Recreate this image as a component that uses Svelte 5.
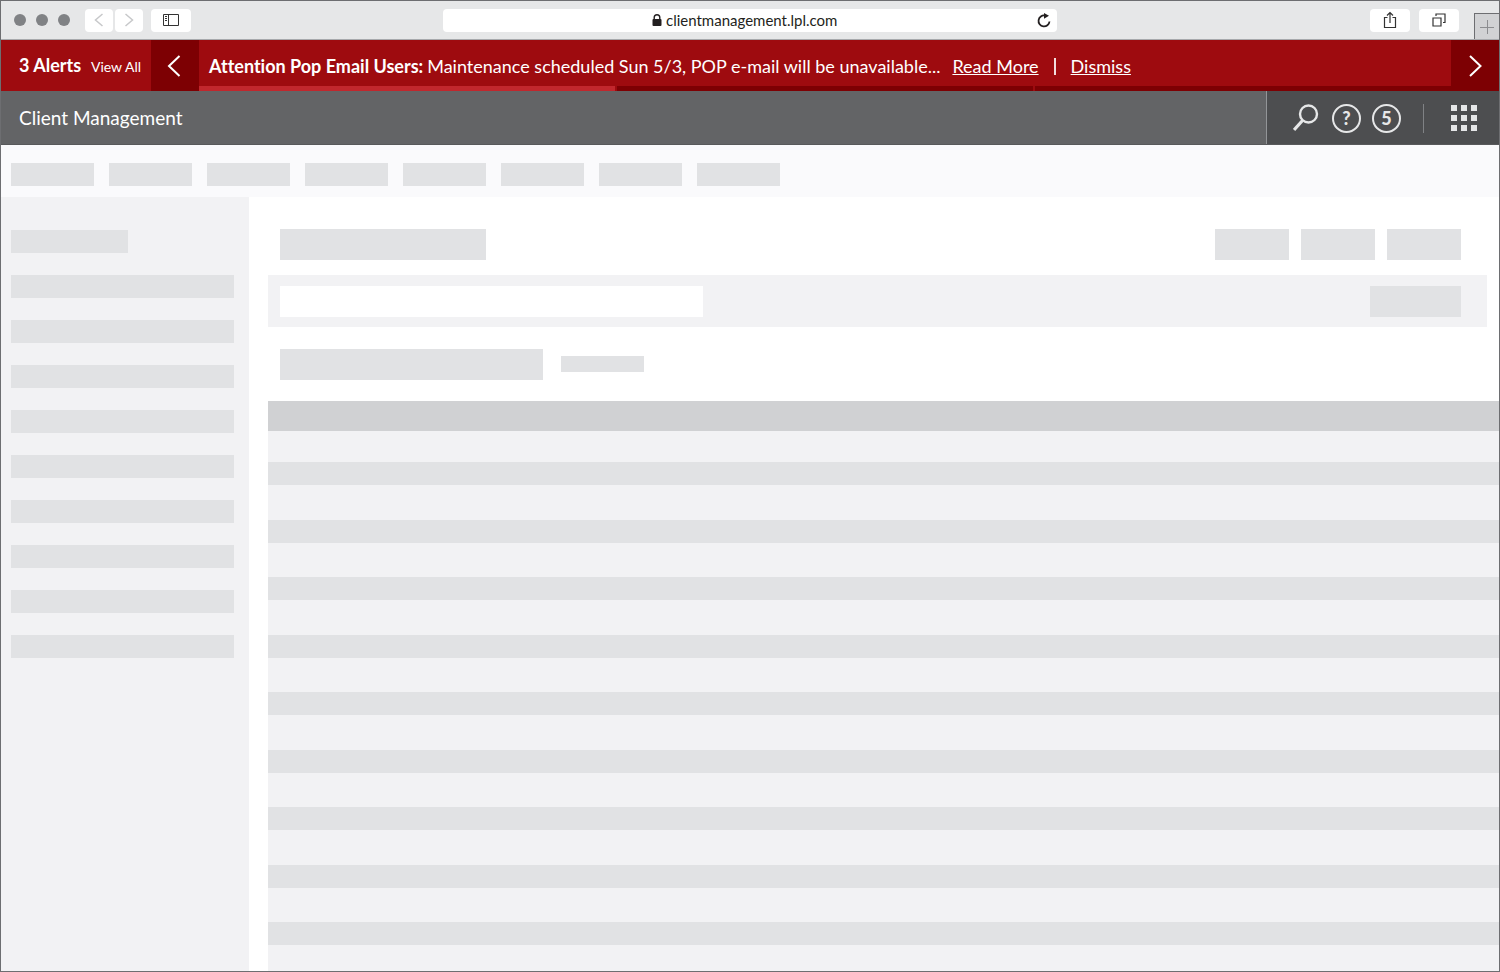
<script>
    let tabs = Array(8)
    let sideLinks = Array(9)
    let actions = Array(3)
    let rows = Array(9)

    let alerts = [
        { title: "Attention Pop Email Users:", text: "Maintenance scheduled Sun 5/3, POP e-mail will be unavailable..." },
        { title: "", text: "" },
        { title: "", text: "" }
    ]
    let current = 0
    let url = "clientmanagement.lpl.com"
</script>

<div class="window">
    <div class="toolbar">
        <div class="tools">
            <div class="lights">
                <span></span>
                <span></span>
                <span></span>
            </div>
            <div class="history">
                <button class="tool" aria-label="Back">
                    <svg width="10" height="14" viewBox="0 0 10 14"><path d="M8.5 1L1.5 7l7 6" fill="none" stroke="#c7c8ca" stroke-width="1.5" /></svg>
                </button>
                <button class="tool" aria-label="Forward">
                    <svg width="10" height="14" viewBox="0 0 10 14"><path d="M1.5 1l7 6-7 6" fill="none" stroke="#c7c8ca" stroke-width="1.5" /></svg>
                </button>
            </div>
            <button class="tool wide" aria-label="Sidebar">
                <svg width="16" height="14" viewBox="0 0 16 14" fill="none" stroke="#333">
                    <path d="M.5 1.5h15v11H.5zM5.5 1.5v11" />
                    <path d="M2 3.5h2M2 5.5h2M2 7.5h2" />
                </svg>
            </button>
        </div>
        <div class="address">
            <svg class="lock" width="10" height="12" viewBox="0 0 10 12">
                <path d="M2.2 6V3.6a2.8 2.8 0 0 1 5.6 0V6" fill="none" stroke="#231f20" stroke-width="1.4" />
                <rect x="0.5" y="5" width="9" height="7" rx="1" fill="#231f20" />
            </svg>
            <input type="text" aria-label="Address" bind:value={url}>
            <button class="reload" aria-label="Reload">
                <svg width="14" height="15" viewBox="0 0 14 15">
                    <path d="M8 2.5a5.5 5.5 0 1 0 4.5 6" fill="none" stroke="#231f20" stroke-width="1.8" />
                    <path d="M7 0l5 2.8-5 3z" fill="#231f20" />
                </svg>
            </button>
        </div>
        <div class="tools right">
            <button class="tool wide" aria-label="Share">
                <svg width="14" height="18" viewBox="0 0 14 18" fill="none" stroke="#333" stroke-width="1.2">
                    <path d="M4.5 6.5h-3v10h11v-10h-3" />
                    <path d="M7 12V1.5M4 4.5l3-3 3 3" />
                </svg>
            </button>
            <button class="tool wide" aria-label="Show tabs">
                <svg width="14" height="14" viewBox="0 0 14 14" fill="none" stroke="#333" stroke-width="1.2">
                    <path d="M1 5h8v8H1z" />
                    <path d="M4 3V1h9v8.5h-2" />
                </svg>
            </button>
            <button class="new-tab" aria-label="New tab">
                <svg width="14" height="14" viewBox="0 0 14 14"><path d="M7.5 0v14M0 7.5h14" stroke="#8c8d90" /></svg>
            </button>
        </div>
    </div>

    <div class="alerts">
        <div class="count">
            <strong>{alerts.length} Alerts</strong>
            <a href="#all">View All</a>
        </div>
        <button class="arrow" aria-label="Previous alert">
            <svg width="18" height="22" viewBox="0 0 18 22"><path d="M13.5 1L3 11l10.5 10" fill="none" stroke="#fff" stroke-width="2" /></svg>
        </button>
        <div class="message">
            <p>
                <strong>{alerts[current].title}</strong>
                <span>{alerts[current].text}</span>
                <a href="#more">Read More</a>
                <i></i>
                <a href="#dismiss">Dismiss</a>
            </p>
            <div class="progress">
                {#each alerts as alert, i}
                    <span class:active={i == current}></span>
                {/each}
            </div>
        </div>
        <button class="arrow" aria-label="Next alert">
            <svg width="14" height="22" viewBox="0 0 14 22"><path d="M2 1l10.5 10L2 21" fill="none" stroke="#fff" stroke-width="2" /></svg>
        </button>
    </div>

    <header>
        <h1>Client Management</h1>
        <div class="menu">
            <button aria-label="Search">
                <svg width="28" height="30" viewBox="0 0 28 30" fill="none" stroke="#e6e7e8">
                    <circle cx="15.5" cy="11" r="8.5" stroke-width="2.4" />
                    <path d="M9.5 17.5L1 27" stroke-width="3.2" />
                </svg>
            </button>
            <button class="round" aria-label="Help">?</button>
            <button class="round" aria-label="Notifications">5</button>
            <span class="divider"></span>
            <button aria-label="Apps">
                <svg width="26" height="26" viewBox="0 0 26 26" fill="#e6e7e8">
                    {#each [0, 10, 20] as y}
                        {#each [0, 10, 20] as x}
                            <rect {x} {y} width="6" height="6" />
                        {/each}
                    {/each}
                </svg>
            </button>
        </div>
    </header>

    <nav>
        {#each tabs as tab}
            <span class="block"></span>
        {/each}
    </nav>

    <div class="content">
        <aside>
            <span class="block heading"></span>
            {#each sideLinks as link}
                <span class="block"></span>
            {/each}
        </aside>
        <main>
            <div class="title-row">
                <span class="block title"></span>
                <div class="actions">
                    {#each actions as action}
                        <span class="block"></span>
                    {/each}
                </div>
            </div>
            <div class="filter">
                <span class="field"></span>
                <span class="block"></span>
            </div>
            <div class="sub-row">
                <span class="block subtitle"></span>
                <span class="block note"></span>
            </div>
            <div class="list-head"></div>
            <div class="list">
                {#each rows as row}
                    <span class="block"></span>
                {/each}
            </div>
        </main>
    </div>
</div>

<style>
    :global(body) {
        margin: 0;
    }
    .window, .window * {
        box-sizing: border-box;
    }
    .window {
        display: flex;
        flex-direction: column;
        min-height: 100vh;
        border: 1px solid #6d6e71;
        background: #fff;
        font-family: Lato, "Open Sans", sans-serif;
        font-variant-ligatures: none;
    }
    button {
        display: flex;
        align-items: center;
        justify-content: center;
        padding: 0;
        border: 0;
        background: none;
        font-family: inherit;
        cursor: pointer;
    }
    .block {
        display: block;
        flex-shrink: 0;
        background: #e1e2e4;
    }

    /* browser bar */
    .toolbar {
        display: grid;
        grid-template-columns: 1fr 41% 1fr;
        align-items: center;
        height: 39px;
        border-bottom: 1px solid #a7a9ac;
        background: #e6e7e8;
    }
    .tools {
        display: flex;
        align-items: center;
        gap: 8px;
        height: 100%;
        padding-left: 13px;
    }
    .tools.right {
        gap: 9px;
        justify-content: flex-end;
    }
    .lights {
        display: flex;
        gap: 10px;
        margin-right: 7px;
    }
    .lights span {
        width: 12px;
        height: 12px;
        border-radius: 50%;
        background: #808285;
    }
    .history {
        display: flex;
        gap: 2px;
    }
    .tool {
        width: 28px;
        height: 23px;
        border-radius: 4px;
        background: #fff;
    }
    .tool.wide {
        width: 40px;
    }
    .new-tab {
        align-self: flex-end;
        width: 25px;
        height: 26px;
        margin-left: 6px;
        border: 1px solid #6d6e71;
        border-width: 1px 0 0 1px;
        background: #d1d2d4;
    }
    .address {
        display: flex;
        align-items: center;
        gap: 4px;
        height: 23px;
        padding: 0 6px 0 14px;
        border-radius: 4px;
        background: #fff;
    }
    .lock {
        margin-left: auto;
    }
    .address input {
        width: 172px;
        height: 20px;
        padding: 0;
        border: 0;
        outline: 0;
        background: none;
        color: #231f20;
        font-family: inherit;
        font-size: 15px;
        line-height: 18px;
    }
    .reload {
        margin-left: auto;
    }

    /* alerts */
    .alerts {
        display: flex;
        height: 51px;
        background: #9e0b0f;
        color: #fff;
    }
    .alerts a {
        color: #fff;
    }
    .count {
        display: flex;
        align-items: baseline;
        justify-content: space-between;
        width: 150px;
        padding: 0 10px 0 18px;
        font-size: 18px;
        line-height: 50px;
        white-space: nowrap;
    }
    .count a {
        font-size: 14px;
        text-decoration: none;
    }
    .arrow {
        width: 48px;
        background: #7d0003;
    }
    .message {
        display: flex;
        flex: 1;
        flex-direction: column;
    }
    .message p {
        display: flex;
        flex: 1;
        align-items: center;
        margin: 0;
        padding: 6px 0 0 10px;
        font-size: 18px;
        line-height: 22px;
        white-space: nowrap;
    }
    .message span {
        margin: 0 12px 0 4px;
    }
    .message i {
        width: 2px;
        height: 17px;
        margin: 0 15px;
        background: #f3dcdc;
    }
    .progress {
        display: flex;
        gap: 2px;
        height: 5px;
    }
    .progress span {
        flex: 1;
        margin: 0;
        background: #7d0003;
    }
    .progress .active {
        background: #c1272d;
    }

    header {
        display: flex;
        height: 54px;
        border-bottom: 1px solid #58595b;
        background: #636466;
    }
    h1 {
        flex: 1;
        margin: 0;
        padding-left: 18px;
        color: #fff;
        font-size: 19px;
        font-weight: 400;
        line-height: 54px;
    }
    .menu {
        display: flex;
        align-items: center;
        gap: 11px;
        padding: 1px 22px 0 26px;
        border-left: 1px solid #939598;
        background: #4d4e50;
    }
    .round {
        width: 29px;
        height: 29px;
        border: 2px solid #e6e7e8;
        border-radius: 50%;
        color: #e6e7e8;
        font-size: 18px;
        font-weight: 900;
    }
    .divider {
        width: 1px;
        height: 29px;
        margin: 0 16px 0 11px;
        background: #808285;
    }

    nav {
        display: flex;
        gap: 15px;
        height: 52px;
        padding: 18px 10px 0;
        background: #fafafc;
    }
    nav .block {
        width: 83px;
        height: 23px;
    }

    .content {
        display: flex;
        flex: 1;
    }
    aside {
        display: flex;
        flex-direction: column;
        gap: 22px;
        width: 248px;
        padding: 33px 15px 0 10px;
        background: #f2f2f4;
    }
    aside .block {
        height: 23px;
    }
    aside .heading {
        width: 117px;
    }
    main {
        display: flex;
        flex: 1;
        flex-direction: column;
        padding-left: 19px;
    }
    .title-row {
        display: flex;
        justify-content: space-between;
        padding: 32px 38px 15px 12px;
    }
    .title {
        width: 206px;
        height: 31px;
    }
    .actions {
        display: flex;
        gap: 12px;
    }
    .actions .block {
        width: 74px;
        height: 31px;
    }
    .filter {
        display: flex;
        align-items: center;
        justify-content: space-between;
        height: 52px;
        margin-right: 12px;
        padding: 0 26px 0 12px;
        background: #f2f2f4;
    }
    .filter .field {
        width: 423px;
        height: 31px;
        background: #fff;
    }
    .filter .block {
        width: 91px;
        height: 31px;
    }
    .sub-row {
        display: flex;
        align-items: center;
        gap: 18px;
        height: 74px;
        padding-left: 12px;
    }
    .subtitle {
        width: 263px;
        height: 31px;
    }
    .note {
        width: 83px;
        height: 16px;
    }
    .list-head {
        height: 30px;
        background: #d0d1d3;
    }
    .list {
        display: flex;
        flex: 1;
        flex-direction: column;
        justify-content: space-between;
        padding: 31px 0 26px;
        background: #f2f2f4;
    }
    .list .block {
        height: 23px;
    }
</style>
